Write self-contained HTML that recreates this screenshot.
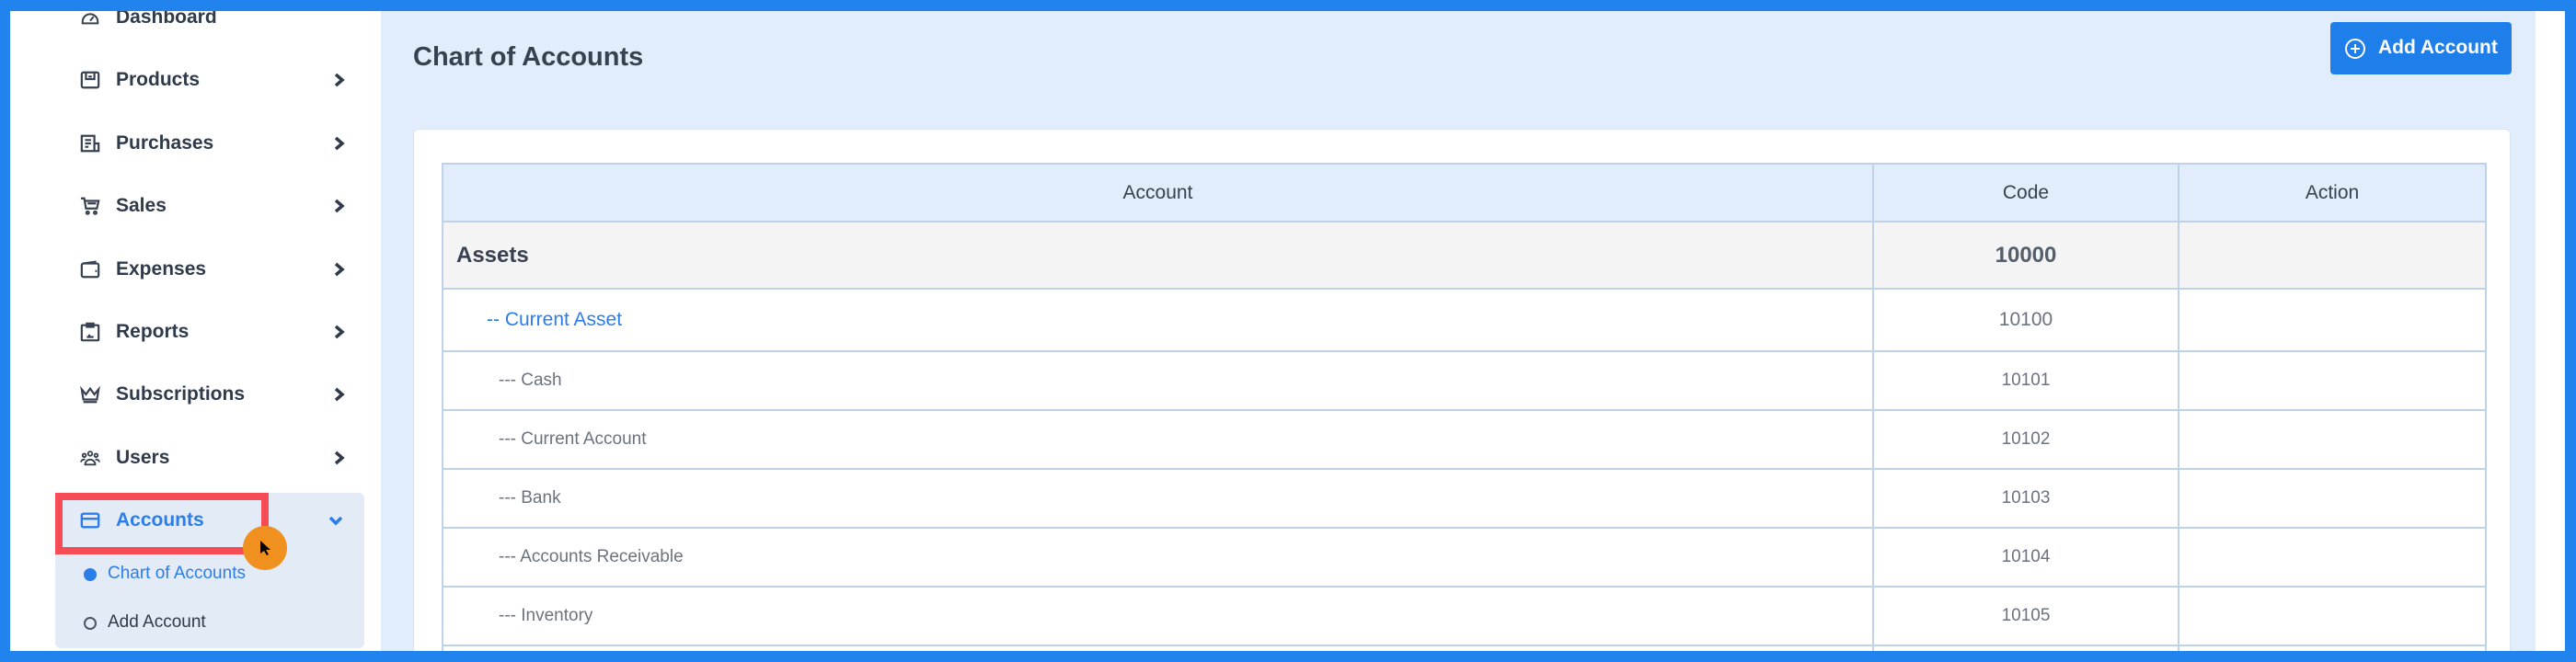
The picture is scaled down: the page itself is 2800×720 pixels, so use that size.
<!DOCTYPE html>
<html><head><meta charset="utf-8"><style>
*{box-sizing:border-box;margin:0;padding:0}
html,body{width:2800px;height:720px;overflow:hidden}
body{background:#2183ee;font-family:"Liberation Sans",sans-serif;position:relative}
.abs{position:absolute}
#side{left:11px;top:12px;width:403px;height:696px;background:#fff;overflow:hidden}
#main{left:414px;top:12px;width:2342px;height:696px;background:#e1edfb;overflow:hidden}
#rstrip{left:2756px;top:12px;width:32px;height:696px;background:#fff}
.item{position:absolute;left:0;width:403px;height:40px;display:flex;align-items:center;font-size:21px;font-weight:bold;color:#2f3a4a}
.item svg.ic{position:absolute;left:76px;top:9px;width:22px;height:22px}
.item span{position:absolute;left:115px;top:8px}
.item .chev{position:absolute;left:352px;top:12px;width:12px;height:16px}
table{border-collapse:collapse;position:absolute;left:66px;top:165px;width:2221px;table-layout:fixed}
td,th{border:2px solid #bfd2ea;font-size:19px;color:#6b7280;height:64px}
th{background:#e1edfb;height:63px;font-size:21px;font-weight:normal;color:#374151}
td.c{text-align:center}
</style></head><body>
<div id="side" class="abs">
 <div class="item" style="top:-13px"><svg class="ic" viewBox="0 0 24 24" fill="none" stroke="#374151" stroke-width="2.2"><path d="M3 17a9 9 0 0 1 18 0v2H3z"/><path d="M12 16l4-5"/></svg><span>Dashboard</span></div>
 <div class="item" style="top:55px"><svg class="ic" viewBox="0 0 24 24" fill="none" stroke="#374151" stroke-width="2.4"><rect x="2" y="3" width="20" height="18" rx="2"/><path d="M7 4v7h10V4M10 8h4"/></svg><span>Products</span><svg class="chev" viewBox="0 0 12 16"><path d="M2 2l7 6-7 6" fill="none" stroke="#2f3a4a" stroke-width="3.5"/></svg></div>
 <div class="item" style="top:124px"><svg class="ic" viewBox="0 0 24 24" fill="none" stroke="#374151" stroke-width="2.4"><path d="M2 3h15v18H2zM17 12h5v9h-5M6 8h7M6 12h7M6 16h4"/></svg><span>Purchases</span><svg class="chev" viewBox="0 0 12 16"><path d="M2 2l7 6-7 6" fill="none" stroke="#2f3a4a" stroke-width="3.5"/></svg></div>
 <div class="item" style="top:192px"><svg class="ic" viewBox="0 0 24 24" fill="none" stroke="#374151" stroke-width="2.4"><path d="M1 3h4l2 12h13l2-9H6M9 9h10"/><circle cx="9" cy="20" r="1.5"/><circle cx="18" cy="20" r="1.5"/></svg><span>Sales</span><svg class="chev" viewBox="0 0 12 16"><path d="M2 2l7 6-7 6" fill="none" stroke="#2f3a4a" stroke-width="3.5"/></svg></div>
 <div class="item" style="top:261px"><svg class="ic" viewBox="0 0 24 24" fill="none" stroke="#374151" stroke-width="2.4"><rect x="2" y="5" width="20" height="16" rx="2"/><path d="M3 5l15-2v2M18 14h2"/></svg><span>Expenses</span><svg class="chev" viewBox="0 0 12 16"><path d="M2 2l7 6-7 6" fill="none" stroke="#2f3a4a" stroke-width="3.5"/></svg></div>
 <div class="item" style="top:329px"><svg class="ic" viewBox="0 0 24 24" fill="none" stroke="#374151" stroke-width="2.4"><rect x="2" y="4" width="20" height="18" rx="1"/><path d="M8 2h8v4H8zM8 18h8M11 15v3"/></svg><span>Reports</span><svg class="chev" viewBox="0 0 12 16"><path d="M2 2l7 6-7 6" fill="none" stroke="#2f3a4a" stroke-width="3.5"/></svg></div>
 <div class="item" style="top:397px"><svg class="ic" viewBox="0 0 24 24" fill="none" stroke="#374151" stroke-width="2.4"><path d="M2 6l5 6 5-7 5 7 5-6-2 12H4zM4 21h16"/></svg><span>Subscriptions</span><svg class="chev" viewBox="0 0 12 16"><path d="M2 2l7 6-7 6" fill="none" stroke="#2f3a4a" stroke-width="3.5"/></svg></div>
 <div class="item" style="top:466px"><svg class="ic" viewBox="0 0 24 24" fill="none" stroke="#374151" stroke-width="2"><circle cx="12" cy="7" r="2.5"/><circle cx="5" cy="9" r="2"/><circle cx="19" cy="9" r="2"/><path d="M6 20a6 6 0 0 1 12 0zM1 17a4 4 0 0 1 5-3M23 17a4 4 0 0 0-5-3"/></svg><span>Users</span><svg class="chev" viewBox="0 0 12 16"><path d="M2 2l7 6-7 6" fill="none" stroke="#2f3a4a" stroke-width="3.5"/></svg></div>
 <div class="abs" style="left:49px;top:524px;width:336px;height:169px;background:#e2ebf6;border-radius:6px"></div>
 <div class="item" style="top:534px;color:#2b7de9"><svg class="ic" viewBox="0 0 24 24" fill="none" stroke="#2b7de9" stroke-width="2.6"><rect x="2" y="4" width="20" height="16" rx="2"/><path d="M2 10h20"/></svg><span>Accounts</span><svg class="chev" style="left:346px;top:14px;width:16px;height:12px" viewBox="0 0 16 12"><path d="M2 3l6 6 6-6" fill="none" stroke="#2b7de9" stroke-width="3.5"/></svg></div>
 <div class="abs" style="left:49px;top:524px;width:232px;height:67px;border:8px solid #f64c55"></div>
 <div class="abs" style="left:253px;top:560px;width:48px;height:48px;border-radius:50%;background:#f0901e"></div>
 <svg class="abs" style="left:271px;top:575px" width="14" height="18" viewBox="0 0 14 18"><path d="M1 1v14l4-3 3 5 2-1-3-5h5z" fill="#000"/></svg>
 <div class="abs" style="left:80px;top:606px;width:14px;height:14px;border-radius:50%;background:#2b7de9"></div>
 <div class="abs" style="left:106px;top:601px;font-size:19px;color:#2b7de9">Chart of Accounts</div>
 <div class="abs" style="left:80px;top:659px;width:14px;height:14px;border-radius:50%;border:2px solid #4b5563"></div>
 <div class="abs" style="left:106px;top:654px;font-size:19px;color:#2f3a4a">Add Account</div>
</div>
<div id="main" class="abs">
 <div class="abs" style="left:35px;top:34px;font-size:29px;font-weight:bold;color:#374151">Chart of Accounts</div>
 <div class="abs" style="left:2119px;top:12px;width:197px;height:57px;background:#1f7fea;border-radius:4px;color:#fff;font-size:21px;font-weight:bold">
  <svg class="abs" style="left:15px;top:17px" width="24" height="24" viewBox="0 0 24 24" fill="none" stroke="#fff" stroke-width="2"><circle cx="12" cy="12" r="10"/><path d="M12 7v10M7 12h10"/></svg>
  <span class="abs" style="left:52px;top:16px">Add Account</span>
 </div>
 <div class="abs" style="left:35px;top:128px;width:2280px;height:568px;background:#fff;border-radius:6px 6px 0 0;border:1px solid #d8e4f2;border-bottom:none;overflow:hidden">
 <table style="left:30px;top:36px">
  <colgroup><col style="width:1555px"><col style="width:332px"><col style="width:334px"></colgroup>
  <tr><th>Account</th><th>Code</th><th>Action</th></tr>
  <tr style="background:#f4f4f4"><td style="height:73px;padding-left:14px;font-size:24px;font-weight:bold;color:#374151">Assets</td><td class="c" style="font-size:24px;font-weight:bold;color:#555e6b">10000</td><td></td></tr>
  <tr><td style="height:68px;padding-left:47px;font-size:21px;color:#2b7de9">-- Current Asset</td><td class="c" style="font-size:21px">10100</td><td></td></tr>
  <tr><td style="padding-left:60px">--- Cash</td><td class="c">10101</td><td></td></tr>
  <tr><td style="padding-left:60px">--- Current Account</td><td class="c">10102</td><td></td></tr>
  <tr><td style="padding-left:60px">--- Bank</td><td class="c">10103</td><td></td></tr>
  <tr><td style="padding-left:60px">--- Accounts Receivable</td><td class="c">10104</td><td></td></tr>
  <tr><td style="padding-left:60px">--- Inventory</td><td class="c">10105</td><td></td></tr>
  <tr><td></td><td></td><td></td></tr>
 </table>
 </div>
</div>
<div id="rstrip" class="abs"></div>
</body></html>
